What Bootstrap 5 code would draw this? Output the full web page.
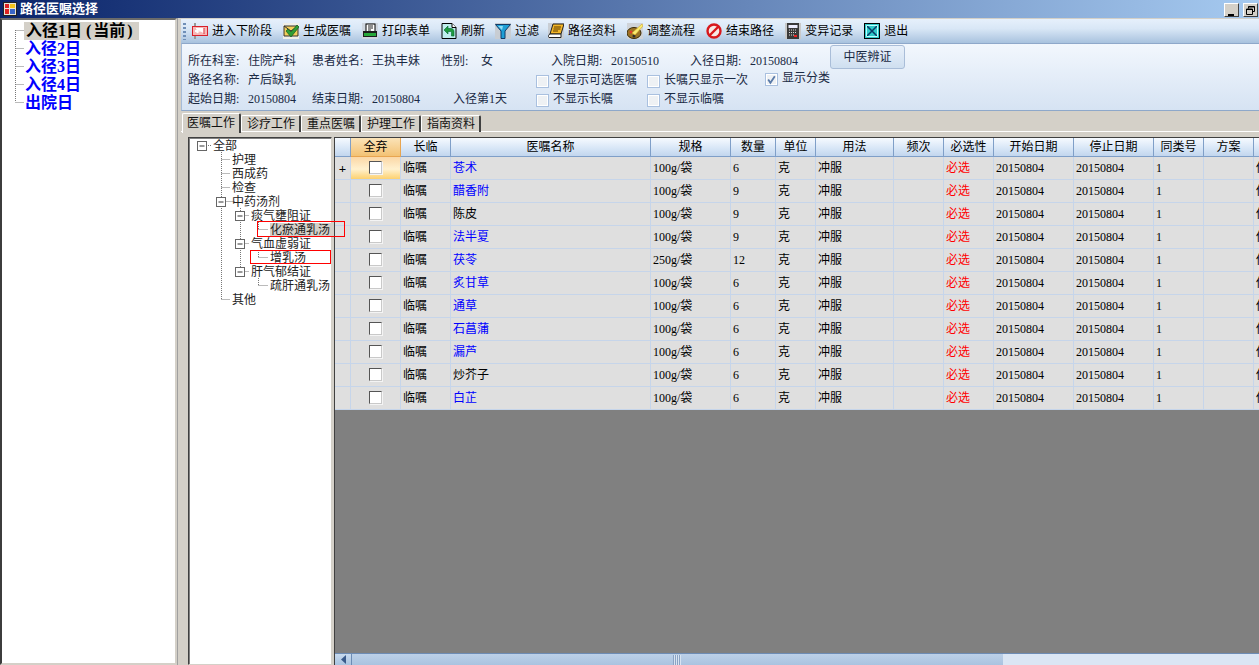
<!DOCTYPE html>
<html lang="zh">
<head>
<meta charset="utf-8">
<title>路径医嘱选择</title>
<link href="https://cdn.jsdelivr.net/npm/bootstrap@5.3.0/dist/css/bootstrap.min.css" rel="stylesheet">
<style>
html,body{height:100%;margin:0;overflow:hidden}
body{font:12px/14px "Liberation Serif","Noto Sans CJK SC",serif;color:#000;background:#d4d0c8}
.win-title{height:18px;background:linear-gradient(90deg,#0a246a,#a6caf0);color:#fff;font-weight:700;font-size:13px;line-height:18px;padding-left:3px;gap:3px}
.win-btn{width:15px;height:14px;background:#d4d0c8;border:1px solid;border-color:#fff #404040 #404040 #fff;margin-right:1px;margin-top:2px;padding:0}
.win-main{height:647px}
.side-tree{width:177px;background:#fff;border:2px solid;border-color:#6b6b6b #d4d0c8 #d4d0c8 #3c3c3c;padding-top:2px;position:relative;flex:none}
.side-row{height:18px;line-height:18px;font-size:16px;font-weight:700;padding-left:23px;color:#00f;white-space:nowrap}
.side-cur{color:#000;background:#d4d0c8;display:inline-block;padding:0 2px 0 2px;margin-left:-1px;height:18px}
.par-l{margin:0 2px 0 4px}.par-r{margin:0 4px 0 2px}
.tree-lines{position:absolute;left:0;top:0;pointer-events:none}
.split{width:4px;flex:none;border-left:1px solid #a0a0a0}
.right-pane{width:1078px;flex:none;position:relative}
.tool-bar{height:25px;background:linear-gradient(180deg,#e6f0fb,#d9e7f6 40%,#a8c2de);padding-left:2px;border-top:1px solid #d4d0c8;white-space:nowrap}
.grip{width:3px;height:17px;margin-right:6px;background:repeating-linear-gradient(180deg,#6f8fb8 0 2px,transparent 2px 4px)}
.tool-item{gap:4px;margin-right:11px}
.tool-tight{margin-right:10px}
.tool-tighter{margin-right:9px}
.tool-item svg{flex:none;display:block}
.info-panel{height:68px;padding:9px 0 0 6px;background:linear-gradient(180deg,#f2f7fd,#d6e3f3);border:1px solid #8ea8ca;border-left-color:#a5bbd8;border-right:0;color:#1a2a44}
.info-row{height:19px;line-height:17px;white-space:nowrap}
.info-row>span,.info-row>label{flex:none;display:block}
.tcm-btn{width:75px;height:24px;margin-top:-8px;margin-left:1px;font-size:12px;line-height:20px;color:#1a2a44;background:linear-gradient(180deg,#e8f0fa,#cfdff0);border:1px solid #a9bdd8;border-radius:3px;padding:0;flex:none}
.fk{width:13px;height:13px;border:1px solid #a9c0df;background:#eef1f4;box-shadow:inset 0 0 0 1px #fff;display:inline-block;flex:none;margin:3px 4px 0 0}
.fk svg{display:block}
.tab-strip{height:21px;padding:2px 0 0 1px;border-bottom:1px solid #fff;gap:0}
.tab-item{padding:0 4px 0 5px;border-top:1px solid #fff;border-left:1px solid #fff;border-right:2px solid #404040;border-radius:2px 2px 0 0;white-space:nowrap;margin-top:2px;height:17px;line-height:16px;font-size:12px;color:#111}
.tab-on{margin-top:0;height:20px;line-height:18px;padding:0 4px 0 4px;position:relative;background:#d4d0c8}
.work-area{height:533px;padding:5px 0 0 7px;gap:2px}
.tree-box{width:144px;flex:none;height:528px;background:#fff;border:1px solid;border-color:#404040 #d4d0c8 #d4d0c8 #404040;position:relative;box-shadow:inset 1px 1px 0 #808080;padding-top:1px}
.tree-row{height:14px;line-height:14px;white-space:nowrap;color:#222}
.lv0{padding-left:24px}.lv1{padding-left:43px}.lv2{padding-left:62px}.lv3{padding-left:81px}
.tree-sel{background:#d4d0c8;display:inline-block;height:14px;padding-right:1px}
.mark-box{position:absolute;border:1px solid #f00;z-index:2}
.mark-a{left:68px;top:83px;width:88px;height:16px}
.mark-b{left:61px;top:112px;width:81px;height:14px}
.grid-box{width:925px;flex:none;height:528px;background:#808080;border-left:1px solid #404040;border-top:1px solid #404040;overflow:hidden}
.rx-table{table-layout:fixed;border-collapse:separate;border-spacing:0;width:925px;margin:0}
.rx-table th,.rx-table td{padding:0 0 0 2px;overflow:hidden;white-space:nowrap;font-weight:400;color:#000}
.rx-table th{height:19px;line-height:18px;text-align:center;background:linear-gradient(180deg,#f6faff,#d6e5f6 60%,#c2d6ee);border-right:1px solid #7f9fc8;border-bottom:1px solid #7f9fc8;padding:0}
.rx-table th.hot{background:linear-gradient(180deg,#fbe3b8,#f3c274);border-color:#e8a550}
.rx-table td{height:23px;line-height:21px;padding-top:1px;background:#dfdfdf;border-right:1px solid #c6d5ea;border-bottom:1px solid #c6d5ea}
.rx-table td.rh{padding:0;font-weight:700;text-align:center;font-size:13px}
.rx-table td.ck{padding:0;text-align:center}
.rx-table td.hotcell{background:linear-gradient(180deg,#fbd7a6,#fff1cf 55%,#fdd16f)}
.cbx{display:block;width:13px;height:13px;margin:0 auto 2px;background:#fff;border:1px solid;border-color:#555 #c9c9c9 #c9c9c9 #555;box-shadow:1px 1px 0 #f4f4f4}
.nm{color:#00f!important}.must{color:#f00!important}
.gray-fill{min-height:0}
.scroll-bar{height:12px;background:#dbe6f4;border-top:1px solid #6d8cb5;flex:none}
.scroll-arrow{width:17px;background:linear-gradient(180deg,#c8daee,#a9c3e0);border-right:1px solid #6d8cb5}
.scroll-thumb{width:651px;background:linear-gradient(180deg,#bcd0e8,#a9c3e0);position:relative}
.scroll-grip{width:8px;height:10px;margin-left:321px;background:repeating-linear-gradient(90deg,#8aa3c4 0 1px,#d8e4f2 1px 2px)}
</style>
</head>
<body>
<div class="d-flex flex-column" style="height:665px">
  <div class="win-title d-flex align-items-center flex-none">
    <svg width="14" height="14" viewBox="0 0 14 14"><rect x=".5" y=".5" width="13" height="13" fill="#e8e4d8" stroke="#222"/><rect x="2" y="2" width="4" height="4" fill="#d22"/><rect x="7" y="2" width="5" height="4" fill="#f3c21c"/><rect x="2" y="7" width="4" height="5" fill="#d22"/><rect x="7" y="7" width="5" height="5" fill="#3a66c8"/></svg>
    <span class="flex-grow-1">路径医嘱选择</span>
    <button class="win-btn d-flex align-items-end justify-content-center" aria-label="最小化"><svg width="9" height="9" viewBox="0 0 9 9"><rect x="1" y="7" width="6" height="2" fill="#000"/></svg></button>
    <button class="win-btn d-flex align-items-center justify-content-center" aria-label="还原"><svg width="9" height="9" viewBox="0 0 9 9" fill="none" stroke="#000"><path d="M2.5 2.5V.5h6v5h-2"/><path d="M.5 3h6v5.5h-6z"/><path d="M2.5 1h6M.5 3.5h6"/></svg></button>
  </div>
  <div class="win-main d-flex">
    <div class="side-tree">
      <svg class="tree-lines" width="30" height="100"><path d="M13.5 10V82M13.5 10.500H22M13.5 28.500H22M13.5 46.500H22M13.5 64.500H22M13.5 82.500H22" stroke="#777" stroke-dasharray="1 1" fill="none"/></svg>
      <div class="side-row"><span class="side-cur">入径1日<span class="par-l">(</span>当前<span class="par-r">)</span></span></div>
      <div class="side-row">入径2日</div>
      <div class="side-row">入径3日</div>
      <div class="side-row">入径4日</div>
      <div class="side-row">出院日</div>
    </div>
    <div class="split"></div>
    <div class="right-pane">
      <div class="tool-bar d-flex align-items-center">
        <span class="grip"></span>
        <span class="tool-item d-flex align-items-center"><svg width="16" height="16" viewBox="0 0 16 16"><rect x="2" y="0" width="2" height="3" fill="#999"/><path d="M3 13v3" stroke="#999" stroke-width="2"/><rect x=".5" y="3.5" width="15" height="9" fill="#f6b8b8" stroke="#d8202a"/><path d="M3 8h8M3 8l3-2v4zM4 5.5h8v5" stroke="#fff" fill="#fff"/><path d="M12 5v6" stroke="#d8202a"/></svg>进入下阶段</span>
        <span class="tool-item d-flex align-items-center"><svg width="16" height="16" viewBox="0 0 16 16"><rect y="0" width="16" height="16" fill="#efefe6"/><path d="M1 3h14v10H1z" fill="#f2cf5a" stroke="#333"/><path d="M1 3l7 5 7-5" fill="none" stroke="#333"/><path d="M3 8l2-2 3 3 6-7 2 2-8 10z" fill="#2f9e35" stroke="#145a1c" stroke-width=".7"/></svg>生成医嘱</span>
        <span class="tool-item d-flex align-items-center"><svg width="16" height="16" viewBox="0 0 16 16"><rect width="16" height="16" fill="#cfd6df"/><rect x="4" y="1" width="9" height="8" fill="#fff" stroke="#000"/><path d="M6 3h5M6 5h5M6 7h3" stroke="#222"/><path d="M1 8h14v6H1z" fill="#1c1c1c"/><rect x="2" y="10" width="12" height="3" fill="#27a83a"/></svg>打印表单</span>
        <span class="tool-item tool-tight d-flex align-items-center"><svg width="16" height="16" viewBox="0 0 16 16"><path d="M1 .5h10l4 4v11H1z" fill="#bfeeee" stroke="#000"/><path d="M11 .5v4h4" fill="#fff" stroke="#000"/><path d="M3 7l4-4v2.500h3c2 0 3 1.500 3 3.500v4h-2.500V9.500c0-.8-.5-1-1-1H7V11z" fill="#1f9c3e" stroke="#063" stroke-width=".6"/></svg>刷新</span>
        <span class="tool-item tool-tighter d-flex align-items-center"><svg width="16" height="16" viewBox="0 0 16 16"><rect width="16" height="16" fill="#c8cdd3"/><path d="M.5 1.500h15L10 8v7.500H6V8z" fill="#1f9fd6" stroke="#123a66"/><path d="M3 3h5L7 7z" fill="#8fdcf5"/></svg>过滤</span>
        <span class="tool-item d-flex align-items-center"><svg width="16" height="16" viewBox="0 0 16 16"><rect width="16" height="16" fill="#c9ced4"/><path d="M5 1h11l-3 10H2z" fill="#f4b627" stroke="#222"/><path d="M2 11h11v3.500H1c-1-1-.5-3 1-3.500z" fill="#fff" stroke="#222"/><path d="M6 4h7M5.500 6h7M5 8h5" stroke="#5a3a00"/></svg>路径资料</span>
        <span class="tool-item d-flex align-items-center"><svg width="16" height="16" viewBox="0 0 16 16"><rect width="16" height="16" fill="#cfd3d8"/><ellipse cx="7" cy="10" rx="7" ry="5.500" fill="#9a7426" stroke="#3a2a08"/><circle cx="4" cy="9" r="1.500" fill="#e03a2a"/><circle cx="7" cy="13" r="1.500" fill="#2a2a2a"/><path d="M5 10L15 1l1 2L8 12z" fill="#f8ea70" stroke="#d8a820" stroke-width=".6"/></svg>调整流程</span>
        <span class="tool-item d-flex align-items-center"><svg width="16" height="16" viewBox="0 0 16 16"><circle cx="8" cy="8" r="6.500" fill="#f7e9e4" stroke="#d8181c" stroke-width="2.400"/><path d="M3.500 12.500l9-9" stroke="#d8181c" stroke-width="2.400"/></svg>结束路径</span>
        <span class="tool-item d-flex align-items-center"><svg width="16" height="16" viewBox="0 0 16 16"><rect width="16" height="16" fill="#c9c9c9"/><rect x="2" y="0" width="12" height="16" fill="#3a3a3a"/><rect x="3.500" y="2" width="9" height="3" fill="#eef"/><path d="M4 7h8M4 9.500h8M4 12h5" stroke="#ddd" stroke-dasharray="1 1"/><rect x="9" y="12" width="3" height="2" fill="#e22"/></svg>变异记录</span>
        <span class="tool-item d-flex align-items-center"><svg width="16" height="16" viewBox="0 0 16 16"><rect x=".5" y=".5" width="15" height="15" fill="#2ec9c9" stroke="#000"/><path d="M3 3l10 10M13 3L3 13" stroke="#0a3a66" stroke-width="1.500"/><path d="M2.500 2.500h11v11h-11z" fill="none" stroke="#bff"/></svg>退出</span>
      </div>
      <div class="info-panel">
        <div class="info-row d-flex">
          <span style="width:60px">所在科室:</span><span style="width:64px">住院产科</span><span style="width:60px">患者姓名:</span><span style="width:69px">王执丰妹</span><span style="width:40px">性别:</span><span style="width:70px">女</span><span style="width:60px">入院日期:</span><span style="width:79px">20150510</span><span style="width:60px">入径日期:</span><span style="width:79px">20150804</span><button class="tcm-btn" type="button">中医辨证</button>
        </div>
        <div class="info-row d-flex">
          <span style="width:60px">路径名称:</span><span style="width:288px">产后缺乳</span>
          <label class="d-flex" style="width:111px"><span class="fk"></span>不显示可选医嘱</label>
          <label class="d-flex" style="width:118px"><span class="fk"></span>长嘱只显示一次</label>
          <label class="d-flex" style="margin-top:-2px"><span class="fk"><svg width="11" height="11" viewBox="0 0 10 10"><path d="M2 5l2 3 4-6" fill="none" stroke="#5a7aa8" stroke-width="1.600"/></svg></span>显示分类</label>
        </div>
        <div class="info-row d-flex">
          <span style="width:60px">起始日期:</span><span style="width:64px">20150804</span><span style="width:60px">结束日期:</span><span style="width:81px">20150804</span><span style="width:83px">入径第1天</span>
          <label class="d-flex" style="width:111px"><span class="fk"></span>不显示长嘱</label>
          <label class="d-flex"><span class="fk"></span>不显示临嘱</label>
        </div>
      </div>
      <div class="tab-strip d-flex align-items-start">
        <span class="tab-item tab-on">医嘱工作</span>
        <span class="tab-item">诊疗工作</span>
        <span class="tab-item">重点医嘱</span>
        <span class="tab-item">护理工作</span>
        <span class="tab-item">指南资料</span>
      </div>
      <div class="work-area d-flex">
        <div class="tree-box">
          <svg class="tree-lines" width="100" height="175" fill="none" stroke="#777"><path d="M32.500 14V162M32.500 21.500H41M32.500 35.500H41M32.500 49.500H41M32.500 63.500H46M32.500 161.500H41M51.500 70V135M51.500 77.500H60M51.500 105.500H60M51.500 133.500H60M69.500 84V92M69.500 91.500H79M69.500 112V120M69.500 119.500H79M69.500 140V148M69.500 147.500H79M19 7.500H23" stroke-dasharray="1 1"/><g stroke="#666" fill="#fff"><rect x="8.500" y="3.500" width="9" height="9"/><rect x="27.500" y="59.500" width="9" height="9"/><rect x="46.500" y="73.500" width="9" height="9"/><rect x="46.500" y="101.500" width="9" height="9"/><rect x="46.500" y="129.500" width="9" height="9"/></g><path d="M10.500 8h5M29.500 64h5M48.500 78h5M48.500 106h5M48.500 134h5" stroke="#333"/></svg>
          <div class="tree-row lv0 position-relative">全部</div>
          <div class="tree-row lv1 position-relative">护理</div>
          <div class="tree-row lv1 position-relative">西成药</div>
          <div class="tree-row lv1 position-relative">检查</div>
          <div class="tree-row lv1 position-relative">中药汤剂</div>
          <div class="tree-row lv2 position-relative">痰气壅阻证</div>
          <div class="tree-row lv3 position-relative"><span class="tree-sel">化瘀通乳汤</span></div>
          <div class="tree-row lv2 position-relative">气血虚弱证</div>
          <div class="tree-row lv3 position-relative">增乳汤</div>
          <div class="tree-row lv2 position-relative">肝气郁结证</div>
          <div class="tree-row lv3 position-relative">疏肝通乳汤</div>
          <div class="tree-row lv1 position-relative">其他</div>
          <div class="mark-box mark-a"></div>
          <div class="mark-box mark-b"></div>
        </div>
        <div class="grid-box d-flex flex-column">
          <table class="rx-table">
            <colgroup><col style="width:16px"><col style="width:50px"><col style="width:50px"><col style="width:200px"><col style="width:80px"><col style="width:45px"><col style="width:40px"><col style="width:78px"><col style="width:50px"><col style="width:50px"><col style="width:80px"><col style="width:80px"><col style="width:50px"><col style="width:50px"><col style="width:6px"></colgroup>
            <thead><tr><th></th><th class="hot">全弃</th><th>长临</th><th>医嘱名称</th><th>规格</th><th>数量</th><th>单位</th><th>用法</th><th>频次</th><th>必选性</th><th>开始日期</th><th>停止日期</th><th>同类号</th><th>方案</th><th></th></tr></thead>
            <tbody id="rx-body"></tbody>
          </table>
          <div class="flex-grow-1 gray-fill"></div>
          <div class="scroll-bar d-flex">
            <div class="scroll-arrow d-flex align-items-center justify-content-center"><svg width="7" height="9" viewBox="0 0 7 9"><path d="M6 0v9L1 4.500z" fill="#3a5a8a"/></svg></div>
            <div class="scroll-thumb d-flex align-items-center"><div class="scroll-grip"></div></div>
          </div>
        </div>
      </div>
    </div>
  </div>
</div>
<script src="https://cdn.jsdelivr.net/npm/bootstrap@5.3.0/dist/js/bootstrap.bundle.min.js"></script>
<script>
var rows=[["苍术",1,"100g/袋",6],["醋香附",1,"100g/袋",9],["陈皮",0,"100g/袋",9],["法半夏",1,"100g/袋",9],["茯苓",1,"250g/袋",12],["炙甘草",1,"100g/袋",6],["通草",1,"100g/袋",6],["石菖蒲",1,"100g/袋",6],["漏芦",1,"100g/袋",6],["炒芥子",0,"100g/袋",6],["白芷",1,"100g/袋",6]];
document.getElementById('rx-body').innerHTML=rows.map(function(r,i){
 return '<tr><td class="rh">'+(i==0?'+':'')+'</td><td class="ck'+(i==0?' hotcell':'')+'"><span class="cbx"></span></td><td>临嘱</td><td class="'+(r[1]?'nm':'')+'">'+r[0]+'</td><td>'+r[2]+'</td><td>'+r[3]+'</td><td>克</td><td>冲服</td><td></td><td class="must">必选</td><td>20150804</td><td>20150804</td><td>1</td><td></td><td>他</td></tr>';
}).join('');
</script>
</body>
</html>
